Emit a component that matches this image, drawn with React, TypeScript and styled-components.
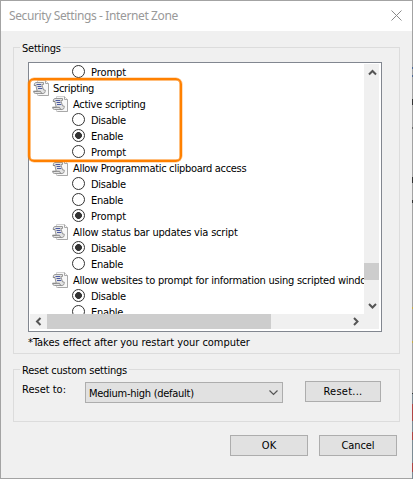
import React from "react";
import styled, { createGlobalStyle } from "styled-components";

const GlobalStyle = createGlobalStyle`
  * { box-sizing: border-box; }
  html, body { margin: 0; padding: 0; background: #a3a3a3; overflow: hidden; }
  body { font-family: "DejaVu Sans Condensed", "DejaVu Sans", sans-serif; font-stretch: condensed; font-size: 11px; color: #000; }
`;

const Desktop = styled.div`
  width: 413px;
  height: 479px;
  padding: 1px;
  background:
    linear-gradient(#a3a3a3 0 67px, #4a6694 67px 69px, #a3a3a3 69px 75px, #4a6694 75px 77px, #a3a3a3 77px 99px, #333 99px 105px,
      #a3a3a3 105px 127px, #666 127px 129px, #a3a3a3 129px 177px, #333 177px 183px, #a3a3a3 183px 200px, #333 200px 203px,
      #a3a3a3 203px 307px, #c5aa45 307px 309px, #a3a3a3 309px 341px, #c5aa45 341px 343px, #a3a3a3 343px 393px, #333 393px 394px,
      #7d8b94 394px 404px, #b04545 404px 421px, #7d8b94 421px 432px, #b04545 432px 440px, #7d8b94 440px 463px,
      #b04545 463px 472px, #7d8b94 472px) right / 1px 100% no-repeat,
    #a3a3a3;
`;

const Dialog = styled.main`
  width: 411px;
  height: 477px;
  display: flex;
  flex-direction: column;
  background: #f0f0f0;
`;

const TitleBar = styled.header`
  height: 30px;
  flex: none;
  display: flex;
  align-items: center;
  justify-content: space-between;
  padding: 0 10px 0 8px;
  background: #fff;
  color: #999;
`;

const Title = styled.h1`
  margin: 0;
  font: 400 12px/16px "Noto Sans", sans-serif;
  letter-spacing: -0.38px;
`;

const CloseIcon = styled.svg`
  margin-bottom: 2px;
`;

const Body = styled.div`
  padding: 16px 12px 0;
  display: flex;
  flex-direction: column;
`;

const Group = styled.fieldset<{ $height: number; $gap: number }>`
  position: relative;
  height: ${(p) => p.$height}px;
  width: 387px;
  margin: 0 0 ${(p) => p.$gap}px;
  padding: 14px 14px 0;
  border: 1px solid #dcdcdc;
  min-width: 0;
`;

const Legend = styled.span`
  position: absolute;
  left: 6px;
  top: -6px;
  padding: 0 2px;
  line-height: 14px;
  background: #f0f0f0;
  white-space: nowrap;
  letter-spacing: -0.23px;
`;

const ListBox = styled.div`
  position: relative;
  width: 354px;
  height: 270px;
  padding: 1px;
  border: 1px solid #828790;
  background: #fff;
  display: grid;
  grid-template-columns: 334px 16px;
  grid-template-rows: 250px 16px;
`;

const Tree = styled.div`
  overflow: hidden;
`;

const Row = styled.div<{ $indent: number; $gap: number }>`
  height: 16px;
  padding-left: ${(p) => p.$indent}px;
  display: flex;
  align-items: center;
  gap: ${(p) => p.$gap}px;
  white-space: nowrap;
  svg { flex: none; }
`;

const Label = styled.span<{ $spacing?: number }>`
  padding-top: 2px;
  line-height: 16px;
  letter-spacing: ${(p) => p.$spacing ?? 0}px;
`;

const Radio = styled.span<{ $on?: boolean }>`
  width: 13px;
  height: 13px;
  flex: none;
  margin-top: -1px;
  border: 1px solid #333;
  border-radius: 50%;
  background: ${(p) => (p.$on ? "radial-gradient(circle, #333 3.1px, #fff 3.7px)" : "#fff")};
`;

const VScroll = styled.div`
  display: flex;
  flex-direction: column;
  background: #f0f0f0;
  width: 15px;
`;

const HScroll = styled.div`
  grid-column: 1 / 3;
  display: flex;
  width: 349px;
  height: 15px;
  background: #f0f0f0;
  padding-right: 16px;
`;

const ArrowCell = styled.div<{ $height?: number }>`
  width: 16px;
  height: ${(p) => p.$height ?? 17}px;
  display: flex;
  align-items: center;
  justify-content: center;
`;

const VThumb = styled.div`
  height: 17px;
  width: 15px;
  margin: 182px 0 17px;
  background: #cdcdcd;
`;

const HThumb = styled.div`
  width: 224px;
  height: 15px;
  margin: 0 auto 0 1px;
  background: #cdcdcd;
`;

const Highlight = styled.div`
  position: absolute;
  left: -1px;
  top: 15px;
  width: 154px;
  height: 84px;
  border: 2px solid #ff8000;
  border-radius: 6px;
  box-shadow: inset 0 0 0 0.5px #ff8000, 0 0 0 0.5px rgba(255, 128, 0, 0.5);
`;

const Note = styled.p`
  margin: 3px 0 0;
  line-height: 16px;
  letter-spacing: -0.04px;
  white-space: nowrap;
`;

const ResetRow = styled.div`
  margin: -3px 0 0 -6px;
  display: flex;
  align-items: flex-start;
`;

const FieldLabel = styled.label`
  width: 63px;
  line-height: 17px;
`;

const Select = styled.button`
  width: 198px;
  height: 21px;
  margin: 1px 22px 0 0;
  padding: 1px 4px 0 3px;
  display: flex;
  align-items: center;
  justify-content: space-between;
  border: 1px solid #adadad;
  background: #e1e1e1;
  font: inherit;
  letter-spacing: -0.27px;
  color: #000;
`;

const Button = styled.button<{ $width: number; $spacing?: number }>`
  width: ${(p) => p.$width}px;
  height: 21px;
  padding: 1px 0 0;
  border: 1px solid #adadad;
  background: #e1e1e1;
  font: inherit;
  line-height: 18px;
  letter-spacing: ${(p) => p.$spacing ?? 0}px;
  color: #000;
`;

const Actions = styled.footer`
  display: flex;
  justify-content: flex-end;
  gap: 11px;
  padding-right: 3px;
`;

const ScriptIcon = () => (
  <svg width="16" height="16" viewBox="0 0 16 16" fill="none">
    <path d="M4.5.5h8l3 3v12h-11z" fill="#f8f8f8" stroke="#d0d0d0" />
    <path d="M12.5.5v3h3M15.5 3.5v12h-10" stroke="#a8a8a8" />
    <path
      d="M3 2.5h7.5v2H8.8l1.8 5.5h1.6v1.5q-.3 2-2.2 2H2.5q-2-.2-1.9-2.2h3.6L2.9 5.5H1.2Q.9 2.8 3 2.5z"
      fill="#e4e4e4"
      stroke="#999"
    />
    <path d="M.6 11.3h6.9q.2 1.6 1.7 2.2M1.2 5.5h1.9" stroke="#858585" />
    <path d="M3.5 4.5h4.5M4.5 6.5h4M5 8.5h4.3" stroke="#4c5ba3" />
  </svg>
);

const paths = {
  up: "M1 5.5 4.5 2 8 5.5",
  down: "M1 2 4.5 5.5 8 2",
  left: "M5.5 1 2 4.5 5.5 8",
  right: "M2 1 5.5 4.5 2 8",
};

const Arrow = ({ dir }: { dir: keyof typeof paths }) => {
  const vertical = dir === "up" || dir === "down";
  return (
    <svg width={vertical ? 9 : 7} height={vertical ? 7 : 9} fill="none">
      <path d={paths[dir]} stroke="#555" strokeWidth="2" />
    </svg>
  );
};

type Item = { kind: "group" | "setting" | "option"; text: string; on?: boolean; spacing?: number };

const items: Item[] = [
  { kind: "option", text: "Prompt", spacing: -0.05 },
  { kind: "group", text: "Scripting", spacing: -0.33 },
  { kind: "setting", text: "Active scripting", spacing: -0.26 },
  { kind: "option", text: "Disable", spacing: -0.27 },
  { kind: "option", text: "Enable", on: true, spacing: -0.25 },
  { kind: "option", text: "Prompt", spacing: -0.05 },
  { kind: "setting", text: "Allow Programmatic clipboard access", spacing: -0.32 },
  { kind: "option", text: "Disable", spacing: -0.27 },
  { kind: "option", text: "Enable", spacing: -0.25 },
  { kind: "option", text: "Prompt", on: true, spacing: -0.05 },
  { kind: "setting", text: "Allow status bar updates via script", spacing: -0.19 },
  { kind: "option", text: "Disable", on: true, spacing: -0.27 },
  { kind: "option", text: "Enable", spacing: -0.25 },
  { kind: "setting", text: "Allow websites to prompt for information using scripted windows", spacing: -0.24 },
  { kind: "option", text: "Disable", on: true, spacing: -0.27 },
  { kind: "option", text: "Enable", spacing: -0.25 },
];

const indents = { group: 3, setting: 22, option: 42 };
const gaps = { group: 4, setting: 5, option: 6 };

export default function App() {
  return (
    <Desktop>
      <GlobalStyle />
      <Dialog>
        <TitleBar>
          <Title>Security Settings - Internet Zone</Title>
          <CloseIcon width="11" height="11" fill="none">
            <path d="M.5.5l10 10M10.5.5l-10 10" stroke="#8a8a8a" />
          </CloseIcon>
        </TitleBar>
        <Body>
          <Group $height={307} $gap={15}>
            <Legend>Settings</Legend>
            <ListBox>
              <Tree>
                {items.map((item, i) => (
                  <Row key={i} $indent={indents[item.kind]} $gap={gaps[item.kind]}>
                    {item.kind === "option" ? <Radio $on={item.on} /> : <ScriptIcon />}
                    <Label $spacing={item.spacing}>{item.text}</Label>
                  </Row>
                ))}
              </Tree>
              <VScroll>
                <ArrowCell><Arrow dir="up" /></ArrowCell>
                <VThumb />
                <ArrowCell><Arrow dir="down" /></ArrowCell>
              </VScroll>
              <HScroll>
                <ArrowCell $height={15}><Arrow dir="left" /></ArrowCell>
                <HThumb />
                <ArrowCell $height={15}><Arrow dir="right" /></ArrowCell>
              </HScroll>
              <Highlight />
            </ListBox>
            <Note>*Takes effect after you restart your computer</Note>
          </Group>
          <Group $height={53} $gap={13}>
            <Legend>Reset custom settings</Legend>
            <ResetRow>
              <FieldLabel>Reset to:</FieldLabel>
              <Select>
                Medium-high (default)
                <svg width="9" height="6" fill="none">
                  <path d="M.5.5l4 4 4-4" stroke="#555" strokeWidth="1.2" />
                </svg>
              </Select>
              <Button $width={76} $spacing={0.25}>Reset...</Button>
            </ResetRow>
          </Group>
          <Actions>
            <Button $width={78}>OK</Button>
            <Button $width={78} $spacing={-0.1}>Cancel</Button>
          </Actions>
        </Body>
      </Dialog>
    </Desktop>
  );
}
